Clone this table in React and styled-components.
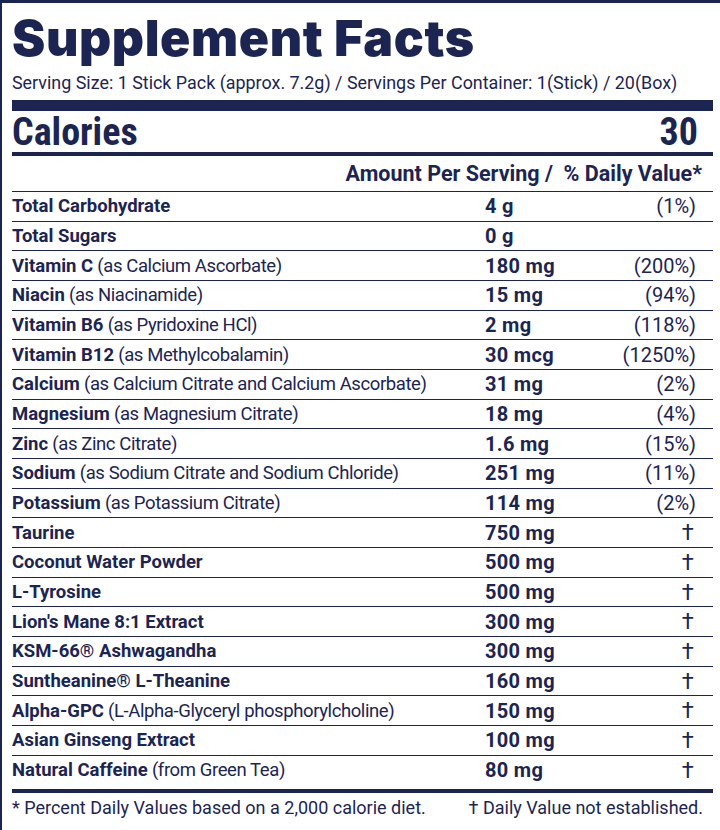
import React from "react";
import styled, { createGlobalStyle } from "styled-components";

const NAVY = "#1c2552";

const Global = createGlobalStyle`
  html, body { margin: 0; padding: 0; background: #fff; }
  body { color: ${NAVY}; font-family: Roboto, "Liberation Sans", sans-serif; }
`;

const Panel = styled.div`
  box-sizing: border-box;
  width: 720px;
  height: 830px;
  overflow: hidden;
  border-top: 3px solid ${NAVY};
  border-left: 2px solid ${NAVY};
  padding: 0 7px 0 10px;
`;

const Title = styled.h1`
  margin: 5px 0 0;
  font-family: Inter, "Noto Sans", sans-serif;
  font-weight: 900;
  font-size: 50px;
  line-height: 60px;
  letter-spacing: 0.6px;
  white-space: nowrap;
`;

const Serving = styled.div`
  margin-top: 4px;
  font-size: 17.9px;
  line-height: 22px;
  white-space: nowrap;
`;

const Bar = styled.div`
  height: ${p => p.h}px;
  background: ${NAVY};
  margin-top: ${p => p.mt || 0}px;
`;

const CaloriesRow = styled.div`
  display: flex;
  justify-content: space-between;
  align-items: center;
  height: 41px;
  padding-right: 15px;
  font-family: "Roboto Condensed", Roboto, sans-serif;
  font-weight: 700;
  font-size: 38px;
`;

const HeaderRow = styled.div`
  display: flex;
  justify-content: flex-end;
  align-items: center;
  height: 35px;
  padding-right: 11px;
  font-weight: 700;
  font-size: 21.5px;
  white-space: pre;
  border-bottom: 1px solid ${NAVY};
`;

const Row = styled.div`
  box-sizing: border-box;
  display: grid;
  grid-template-columns: 473px 1fr auto;
  align-items: center;
  height: ${p => (p.last ? "33px" : "29.68px")};
  padding: 0 17px ${p => (p.last ? "4px" : "0")} 0;
  white-space: nowrap;
  border-bottom: ${p => (p.last ? "none" : `1px solid ${NAVY}`)};
`;

const Name = styled.div`
  font-size: 18.5px;
  font-weight: 400;
  letter-spacing: -0.4px;
  b {
    font-weight: 700;
    letter-spacing: 0;
  }
`;

const Amount = styled.div`
  font-size: 20px;
  font-weight: 700;
  letter-spacing: 0.3px;
`;

const Pct = styled.div`
  text-align: right;
  font-size: ${p => (p.dagger ? "22px" : "20px")};
  font-weight: 400;
  padding-right: ${p => (p.dagger ? "2px" : "0")};
`;

const Footer = styled.div`
  display: flex;
  justify-content: space-between;
  padding-right: 10px;
  margin-top: 4px;
  font-size: 18px;
  line-height: 22px;
  white-space: nowrap;
`;

const rows = [
  ["Total Carbohydrate", "", "4 g", "(1%)"],
  ["Total Sugars", "", "0 g", ""],
  ["Vitamin C", "(as Calcium Ascorbate)", "180 mg", "(200%)"],
  ["Niacin", "(as Niacinamide)", "15 mg", "(94%)"],
  ["Vitamin B6", "(as Pyridoxine HCl)", "2 mg", "(118%)"],
  ["Vitamin B12", "(as Methylcobalamin)", "30 mcg", "(1250%)"],
  ["Calcium", "(as Calcium Citrate and Calcium Ascorbate)", "31 mg", "(2%)"],
  ["Magnesium", "(as Magnesium Citrate)", "18 mg", "(4%)"],
  ["Zinc", "(as Zinc Citrate)", "1.6 mg", "(15%)"],
  ["Sodium", "(as Sodium Citrate and Sodium Chloride)", "251 mg", "(11%)"],
  ["Potassium", "(as Potassium Citrate)", "114 mg", "(2%)"],
  ["Taurine", "", "750 mg", "†"],
  ["Coconut Water Powder", "", "500 mg", "†"],
  ["L-Tyrosine", "", "500 mg", "†"],
  ["Lion's Mane 8:1 Extract", "", "300 mg", "†"],
  ["KSM-66® Ashwagandha", "", "300 mg", "†"],
  ["Suntheanine® L-Theanine", "", "160 mg", "†"],
  ["Alpha-GPC", "(L-Alpha-Glyceryl phosphorylcholine)", "150 mg", "†"],
  ["Asian Ginseng Extract", "", "100 mg", "†"],
  ["Natural Caffeine", "(from Green Tea)", "80 mg", "†"],
];

export default function App() {
  return (
    <>
      <Global />
      <Panel>
        <Title>Supplement Facts</Title>
        <Serving>
          Serving Size: 1 Stick Pack (approx. 7.2g) / Servings Per Container: 1(Stick) / 20(Box)
        </Serving>
        <Bar h={11} mt={6} />
        <CaloriesRow>
          <span>Calories</span>
          <span>30</span>
        </CaloriesRow>
        <Bar h={4} />
        <HeaderRow>{"Amount Per Serving /  % Daily Value*"}</HeaderRow>
        {rows.map(([b, rest, amt, pct], i) => (
          <Row key={b} last={i === rows.length - 1}>
            <Name>
              <b>{b}</b>
              {rest ? " " + rest : ""}
            </Name>
            <Amount>{amt}</Amount>
            <Pct dagger={pct === "†"}>{pct}</Pct>
          </Row>
        ))}
        <Bar h={4} />
        <Footer>
          <span>* Percent Daily Values based on a 2,000 calorie diet.</span>
          <span>† Daily Value not established.</span>
        </Footer>
      </Panel>
    </>
  );
}
